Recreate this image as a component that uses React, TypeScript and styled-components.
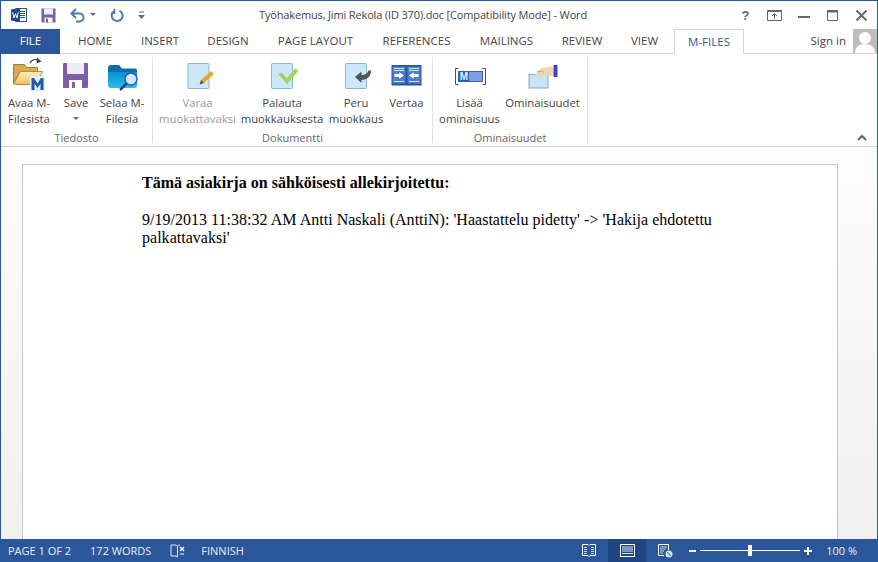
import styled, { createGlobalStyle } from "styled-components";

const GlobalStyle = createGlobalStyle`
  html, body {
    margin: 0;
    padding: 0;
    background: #fff;
    overflow: hidden;
  }
`;

const uiFont = `"Open Sans", "Noto Sans", "Liberation Sans", sans-serif`;

const tabs = [
  { label: "HOME", width: 64, first: true },
  { label: "INSERT", width: 66 },
  { label: "DESIGN", width: 70 },
  { label: "PAGE LAYOUT", width: 105 },
  { label: "REFERENCES", width: 97 },
  { label: "MAILINGS", width: 83 },
  { label: "REVIEW", width: 68 },
  { label: "VIEW", width: 57 },
];

const Paper = ({ x = 7.5 }: { x?: number }) => (
  <rect x={x} y="7.5" width="21" height="25" rx="1" fill="#cde7fb" stroke="#8db6cb" />
);

const WordIcon = () => (
  <svg width="16" height="16" viewBox="0 0 16 16">
    <rect x="5" y="1.5" width="10.5" height="13" fill="#fff" stroke="#2b579a" />
    <path d="M9 4.5h5M9 6.5h5M9 8.5h5M9 10.5h5" stroke="#2b579a" />
    <path d="M0 2.5 9 1v14L0 13.5z" fill="#1f4a8c" />
    <path d="M1.6 5.3 2.9 11l1.6-4.2L6 11l1.3-5.7" fill="none" stroke="#fff" strokeWidth="1" />
  </svg>
);

const QatSave = () => (
  <svg width="15" height="15" viewBox="0 0 15 15">
    <path d="M.5.500h14v14H.5z" fill="#7b5ca6" />
    <rect x="3" y=".5" width="9" height="6" fill="#f0ecf6" />
    <rect x="3.500" y="9.500" width="8" height="5" fill="#fff" />
    <rect x="5" y="10.500" width="2" height="4" fill="#7b5ca6" />
  </svg>
);

const Undo = () => (
  <svg width="15" height="15" viewBox="0 0 15 15" fill="none" stroke="#4a7db4" strokeWidth="2">
    <path d="M1.500 5.500h8a4 4 0 0 1 0 8H6" />
    <path d="M6 1 1.500 5.500 6 10" />
  </svg>
);

const Redo = () => (
  <svg width="15" height="15" viewBox="0 0 15 15" fill="none" stroke="#4a7db4" strokeWidth="2">
    <path d="M9.500 2.600a5.500 5.500 0 1 1-5.700.6" />
    <path d="M3.500 1v4.500H.5" strokeWidth="1.600" transform="translate(1 -.3)" />
  </svg>
);

const Caret = () => (
  <svg width="7" height="4" viewBox="0 0 7 4">
    <path d="M0 0h6L3 3z" fill="#6a6a6a" />
  </svg>
);

const Customize = () => (
  <svg width="7" height="9" viewBox="0 0 7 9">
    <path d="M1 1h5" stroke="#6a6a6a" />
    <path d="M0 4h7L3.500 8z" fill="#6a6a6a" />
  </svg>
);

const AvaaIcon = () => (
  <svg width="36" height="37" viewBox="0 0 36 37">
    <defs>
      <linearGradient id="avaaFront" x1="0" y1="0" x2="0" y2="1">
        <stop offset="0" stopColor="#fff0b8" />
        <stop offset="1" stopColor="#eebf62" />
      </linearGradient>
    </defs>
    <path d="M19 7c2-4 6-4.500 9-2" fill="none" stroke="#444" strokeWidth="1.300" />
    <path d="M26 1.500 30.500 5.500 25.500 7.500z" fill="#444" />
    <path d="M2.500 27V8.500h11l2 3h11V16H9z" fill="#d9ab57" stroke="#a87f36" />
    <path d="M2.500 28 9.500 15.500h22L25 28.500H5z" fill="url(#avaaFront)" stroke="#b78c3c" />
    <rect x="19" y="20" width="15" height="15.500" rx="1" fill="#e4eef9" />
    <path d="M20.500 34V22h2.500l3.500 5.500L30 22h2.500v12h-3v-6.500L26.500 32l-3-4.500V34z" fill="#27579f" />
  </svg>
);

const SaveIcon = () => (
  <svg width="36" height="37" viewBox="0 0 36 37">
    <rect x="5" y="7" width="25" height="25" rx="1" fill="#7f5ea8" />
    <rect x="9" y="7" width="17" height="11" fill="#f0ecf6" />
    <rect x="11" y="24" width="13" height="8" fill="#fff" />
    <rect x="14" y="26" width="3" height="6" fill="#7f5ea8" />
  </svg>
);

const SelaaIcon = () => (
  <svg width="36" height="37" viewBox="0 0 36 37">
    <defs>
      <linearGradient id="selaaFront" x1="0" y1="0" x2="0" y2="1">
        <stop offset="0" stopColor="#0f8fcf" />
        <stop offset="1" stopColor="#22c0ee" />
      </linearGradient>
    </defs>
    <path d="M4 12a3 3 0 0 1 3-3h8l3 3.500h13a2 2 0 0 1 2 2V17H4z" fill="#0b6ea6" />
    <path d="M4 16h29v13a3 3 0 0 1-3 3H7a3 3 0 0 1-3-3z" fill="url(#selaaFront)" />
    <path d="M23 27 16 34" stroke="#1f3f8f" strokeWidth="2.500" />
    <circle cx="27" cy="23" r="6" fill="#cfe9f8" stroke="#2a5caa" strokeWidth="1.500" />
  </svg>
);

const VaraaIcon = () => (
  <svg width="36" height="37" viewBox="0 0 36 37">
    <Paper x={8} />
    <path d="M21 24 31 15l3 3-10 9z" fill="#e9a431" />
    <path d="M19.500 28.500 21 24l3 3z" fill="#555" />
  </svg>
);

const PalautaIcon = () => (
  <svg width="36" height="37" viewBox="0 0 36 37">
    <Paper />
    <path d="M16 17.500 23 25 33 13.500" fill="none" stroke="#a2d45a" strokeWidth="4" />
  </svg>
);

const PeruIcon = () => (
  <svg width="36" height="37" viewBox="0 0 36 37">
    <Paper />
    <path d="M17 21 23.500 15.500v3.500c3 0 5.500-1 7-4.500h2.500c0 6-4 9.500-9.500 9.500v3z" fill="#555" />
  </svg>
);

const VertaaIcon = () => (
  <svg width="36" height="37" viewBox="0 0 36 37">
    <rect x="2.500" y="9" width="30" height="20" fill="#24559f" />
    <rect x="3.500" y="10.500" width="13" height="17" fill="#4f80cc" />
    <rect x="18.500" y="10.500" width="13" height="17" fill="#4f80cc" />
    <path d="M5 12.500h10M5 14.500h10M20 12.500h10M20 14.500h10M5 25.500h10M20 25.500h10" stroke="#cfe0f7" />
    <path d="M5 17.500h5v-2l5.500 4L10 23.500v-2H5zM30 17.500h-5v-2l-5.500 4 5.500 4v-2h5z" fill="#fff" stroke="#1f3f7f" strokeWidth=".5" />
    <path d="M3 29.500h30" stroke="#9aa7ba" />
  </svg>
);

const LisaaIcon = () => (
  <svg width="36" height="37" viewBox="0 0 36 37">
    <path d="M6.500 12.500h-3v16h3M30.500 12.500h3v16h-3" fill="none" stroke="#38517e" />
    <rect x="6.500" y="15.500" width="24" height="10" fill="#7f9eea" stroke="#3f5fa6" />
    <rect x="7" y="16" width="10" height="9" fill="#2e5cab" />
    <MLetter x="12" y="24">M</MLetter>
  </svg>
);

const MLetter = styled.text`
  font-family: "Liberation Sans", sans-serif;
  font-size: 10px;
  font-weight: 700;
  fill: #e7f2ff;
  text-anchor: middle;
`;

const OminaisuudetIcon = () => (
  <svg width="36" height="37" viewBox="0 0 36 37">
    <rect x="4" y="18.500" width="19" height="13.500" fill="#c6e5fa" stroke="#7fa9bf" />
    <path d="M10 18.500 15 13c3-2 9-2.500 13-2v8.500c-3 1-6 1-8 0l-5 2z" fill="#ecd6b8" />
    <path d="M12 16c3-1 5-1 7 0" fill="none" stroke="#c2a484" />
    <rect x="28.500" y="9" width="4" height="12" fill="#3a45c8" />
  </svg>
);

const ReadIcon = () => (
  <svg width="14" height="13" viewBox="0 0 14 13" fill="none" stroke="#fff">
    <path d="M.5.500h5.500l1 1 1-1h5.500v11h-5.500l-1 1-1-1H.500z" />
    <path d="M2 3.500h3M2 5.500h3M2 7.500h3M2 9.500h3M9 3.500h3M9 5.500h3M9 7.500h3M9 9.500h3" stroke="#c6d4ea" />
  </svg>
);

const PrintIcon = () => (
  <svg width="15" height="13" viewBox="0 0 15 13" fill="none" stroke="#fff">
    <rect x=".5" y=".5" width="14" height="12" />
    <path d="M2 3h11M2 5h11M2 7h11M2 9.500h11" stroke="#dbe4f2" />
  </svg>
);

const WebIcon = () => (
  <svg width="15" height="14" viewBox="0 0 15 14" fill="none" stroke="#fff">
    <path d="M.5.500h10V6M.5.500v11H6" />
    <path d="M2 3h7M2 5h6M2 7h4M2 9h3" stroke="#c6d4ea" />
    <circle cx="11" cy="10" r="3.500" fill="#d8e2f2" stroke="none" />
    <path d="M9 9c1-1 2 0 2 1s1 2 2 1" stroke="#2b579a" />
  </svg>
);

const ProofIcon = () => (
  <svg width="16" height="14" viewBox="0 0 16 14" fill="none" stroke="#dfe7f3">
    <path d="M6 1H1v11h5l1.500 1V2zM7.500 2 9 1h1M7.500 5v8" />
    <path d="M10 3l4 4M14 3l-4 4" stroke="#fff" strokeWidth="1.400" />
    <path d="M10 10h4" stroke="#fff" />
  </svg>
);

const App = () => {
  return (
    <Window>
      <GlobalStyle />
      <TitleBar>
        <Quick>
          <WordSlot><WordIcon /></WordSlot>
          <QatSlot $width={29}><QatSave /></QatSlot>
          <QatSlot $width={20}><Undo /></QatSlot>
          <QatSlot $width={20}><Caret /></QatSlot>
          <QatSlot $width={28}><Redo /></QatSlot>
          <QatSlot $width={15}><Customize /></QatSlot>
        </Quick>
        <Title>Työhakemus, Jimi Rekola (ID 370).doc [Compatibility Mode] - Word</Title>
        <Controls>
          <Help>?</Help>
          <Control>
            <svg width="15" height="11" viewBox="0 0 15 11" fill="none" stroke="#666">
              <path d="M.5 1.500h14v9H.5zM0 .5h15" />
              <path d="M7.500 9V4M5 6l2.500-2.500L10 6" />
            </svg>
          </Control>
          <MinimizeControl>
            <svg width="12" height="2" viewBox="0 0 12 2"><rect width="12" height="2" fill="#666" /></svg>
          </MinimizeControl>
          <Control>
            <svg width="11" height="11" viewBox="0 0 11 11" fill="none" stroke="#666">
              <path d="M.5.500h10v10H.5z" />
              <path d="M0 1.500h11" strokeWidth="2" />
            </svg>
          </Control>
          <Control>
            <svg width="11" height="11" viewBox="0 0 11 11" fill="none" stroke="#666" strokeWidth="2">
              <path d="M.5.500l10 10M10.500.5l-10 10" />
            </svg>
          </Control>
        </Controls>
      </TitleBar>

      <TabBar>
        <FileTab>FILE</FileTab>
        {tabs.map((t) => (
          <Tab key={t.label} $width={t.width} $first={t.first}>{t.label}</Tab>
        ))}
        <ActiveTab>M-FILES</ActiveTab>
        <SignIn>Sign in</SignIn>
        <Avatar>
          <svg width="24" height="24" viewBox="0 0 24 24">
            <rect width="24" height="24" fill="#bdbdbd" />
            <circle cx="12" cy="9" r="6" fill="#fff" />
            <path d="M2 24c0-6 4-9 10-9s10 3 10 9z" fill="#fff" />
          </svg>
        </Avatar>
      </TabBar>

      <Ribbon>
        <Group $width={152}>
          <Buttons>
            <RibbonButton $width={50}>
              <IconBox><AvaaIcon /></IconBox>
              <Label>Avaa M-<br />Filesista</Label>
            </RibbonButton>
            <RibbonButton $width={44}>
              <IconBox><SaveIcon /></IconBox>
              <Label>Save</Label>
              <ButtonCaret><Caret /></ButtonCaret>
            </RibbonButton>
            <RibbonButton $width={48}>
              <IconBox><SelaaIcon /></IconBox>
              <Label>Selaa M-<br />Filesia</Label>
            </RibbonButton>
          </Buttons>
          <GroupName>Tiedosto</GroupName>
        </Group>
        <Group $width={280}>
          <Buttons>
            <RibbonButton $width={83} $disabled>
              <IconBox><VaraaIcon /></IconBox>
              <Label>Varaa<br />muokattavaksi</Label>
            </RibbonButton>
            <RibbonButton $width={86}>
              <IconBox><PalautaIcon /></IconBox>
              <Label>Palauta<br />muokkauksesta</Label>
            </RibbonButton>
            <RibbonButton $width={62}>
              <IconBox><PeruIcon /></IconBox>
              <Label>Peru<br />muokkaus</Label>
            </RibbonButton>
            <RibbonButton $width={39}>
              <IconBox><VertaaIcon /></IconBox>
              <Label>Vertaa</Label>
            </RibbonButton>
          </Buttons>
          <GroupName>Dokumentti</GroupName>
        </Group>
        <Group $width={155}>
          <Buttons>
            <RibbonButton $width={67}>
              <IconBox><LisaaIcon /></IconBox>
              <Label>Lisää<br />ominaisuus</Label>
            </RibbonButton>
            <RibbonButton $width={79}>
              <IconBox><OminaisuudetIcon /></IconBox>
              <Label>Ominaisuudet</Label>
            </RibbonButton>
          </Buttons>
          <GroupName>Ominaisuudet</GroupName>
        </Group>
        <Collapse>
          <svg width="10" height="7" viewBox="0 0 10 7" fill="none" stroke="#666" strokeWidth="2">
            <path d="M1 6 5 2l4 4" />
          </svg>
        </Collapse>
      </Ribbon>

      <DocArea>
        <Page>
          <Heading>Tämä asiakirja on sähköisesti allekirjoitettu:</Heading>
          <Body>9/19/2013 11:38:32 AM Antti Naskali (AnttiN): 'Haastattelu pidetty' -&gt; 'Hakija ehdotettu palkattavaksi'</Body>
        </Page>
      </DocArea>

      <StatusBar>
        <StatusText $left={8}>PAGE 1 OF 2</StatusText>
        <StatusText $left={19}>172 WORDS</StatusText>
        <ProofSlot><ProofIcon /></ProofSlot>
        <StatusText $left={15}>FINNISH</StatusText>
        <StatusRight>
          <ViewButton><ReadIcon /></ViewButton>
          <ViewButton $active><PrintIcon /></ViewButton>
          <ViewButton><WebIcon /></ViewButton>
          <Zoom>
            <ZoomSign>
              <svg width="7" height="2" viewBox="0 0 7 2"><rect width="7" height="2" fill="#fff" /></svg>
            </ZoomSign>
            <Track><Thumb /></Track>
            <ZoomSign>
              <svg width="8" height="8" viewBox="0 0 8 8"><path d="M3 0h2v3h3v2H5v3H3V5H0V3h3z" fill="#fff" /></svg>
            </ZoomSign>
          </Zoom>
          <ZoomValue>100 %</ZoomValue>
        </StatusRight>
      </StatusBar>
    </Window>
  );
};

const Window = styled.div`
  box-sizing: border-box;
  width: 878px;
  height: 562px;
  display: flex;
  flex-direction: column;
  border: 1px solid #2b579a;
  border-bottom: 0;
  background: #fff;
  font-family: ${uiFont};
  overflow: hidden;
`;

const TitleBar = styled.div`
  height: 28px;
  display: flex;
  align-items: center;
  flex-shrink: 0;
`;

const Quick = styled.div`
  width: 153px;
  display: flex;
  align-items: center;
`;

const WordSlot = styled.div`
  width: 40px;
  padding-left: 10px;
  box-sizing: border-box;
  display: flex;
`;

const QatSlot = styled.div<{ $width: number }>`
  width: ${(p) => p.$width}px;
  display: flex;
`;

const Title = styled.div`
  width: 538px;
  padding-bottom: 1px;
  text-align: center;
  font-size: 11px;
  letter-spacing: -0.15px;
  color: #444;
  white-space: nowrap;
`;

const Controls = styled.div`
  flex: 1;
  display: flex;
  align-items: center;
  justify-content: flex-end;
  padding-right: 1px;
`;

const Control = styled.div`
  width: 29px;
  display: flex;
  justify-content: center;
`;

const MinimizeControl = styled(Control)`
  padding-top: 4px;
`;

const Help = styled(Control)`
  font-family: "Liberation Sans", sans-serif;
  font-size: 13px;
  font-weight: 700;
  color: #666;
`;

const TabBar = styled.div`
  height: 25px;
  display: flex;
  align-items: stretch;
  box-sizing: border-box;
  border-bottom: 1px solid #d4d4d4;
  flex-shrink: 0;
`;

const FileTab = styled.div`
  width: 59px;
  margin-bottom: -1px;
  padding-bottom: 2px;
  background: #2b579a;
  color: #fff;
  font-size: 11.500px;
  display: flex;
  align-items: center;
  justify-content: center;
`;

const Tab = styled.div<{ $width: number; $first?: boolean }>`
  width: ${(p) => p.$width}px;
  margin-left: ${(p) => (p.$first ? 3 : 0)}px;
  padding-bottom: 2px;
  color: #444;
  font-size: 11.500px;
  display: flex;
  align-items: center;
  justify-content: center;
  white-space: nowrap;
`;

const ActiveTab = styled.div`
  width: 70px;
  box-sizing: border-box;
  margin-left: 1px;
  margin-bottom: -1px;
  padding-bottom: 2px;
  background: #fff;
  border: 1px solid #d4d4d4;
  border-bottom: 0;
  color: #2b579a;
  font-size: 11.500px;
  display: flex;
  align-items: center;
  justify-content: center;
`;

const SignIn = styled.div`
  margin-left: auto;
  margin-right: 7px;
  padding-bottom: 2px;
  color: #444;
  font-size: 11.500px;
  display: flex;
  align-items: center;
`;

const Avatar = styled.div`
  width: 24px;
  height: 24px;
  overflow: hidden;
`;

const Ribbon = styled.div`
  height: 93px;
  box-sizing: border-box;
  display: flex;
  border-bottom: 1px solid #d4d4d4;
  flex-shrink: 0;
`;

const Group = styled.div<{ $width: number }>`
  width: ${(p) => p.$width}px;
  box-sizing: border-box;
  margin: 4px 0 3px;
  padding-left: 3px;
  border-right: 1px solid #e1e1e1;
  display: flex;
  flex-direction: column;
`;

const Buttons = styled.div`
  flex: 1;
  display: flex;
  margin-top: -2px;
`;

const RibbonButton = styled.div<{ $width: number; $disabled?: boolean }>`
  width: ${(p) => p.$width}px;
  flex-shrink: 0;
  display: flex;
  flex-direction: column;
  align-items: center;
  color: ${(p) => (p.$disabled ? "#9a9a9a" : "#444")};
`;

const IconBox = styled.div`
  height: 37px;
  margin-bottom: 2px;
  display: flex;
`;

const Label = styled.div`
  font-size: 11.300px;
  line-height: 16px;
  text-align: center;
  white-space: nowrap;
`;

const ButtonCaret = styled.div`
  margin-top: 6px;
  display: flex;
`;

const GroupName = styled.div`
  height: 12px;
  line-height: 14px;
  font-size: 11px;
  color: #666;
  text-align: center;
  padding-right: 3px;
`;

const Collapse = styled.div`
  margin-left: auto;
  margin-right: 10px;
  align-self: flex-end;
  margin-bottom: 5px;
  display: flex;
`;

const DocArea = styled.div`
  flex: 1;
  min-height: 0;
  padding: 17px 39px 0 21px;
  background: linear-gradient(#fdfdfd, #f0f0f0);
  overflow: hidden;
`;

const Page = styled.div`
  box-sizing: border-box;
  height: 100%;
  padding: 9px 120px 0 119px;
  background: #fff;
  border: 1px solid #c6c6c6;
  border-bottom: 0;
  font-family: "Liberation Serif", "Times New Roman", serif;
  font-size: 16px;
  line-height: 18px;
  letter-spacing: 0.02px;
  color: #000;
`;

const Heading = styled.div`
  font-weight: 700;
  margin-bottom: 19px;
`;

const Body = styled.div``;

const StatusBar = styled.div`
  height: 23px;
  margin: 0 -1px;
  background: #2b579a;
  color: #fff;
  display: flex;
  align-items: center;
  flex-shrink: 0;
`;

const StatusText = styled.div<{ $left: number }>`
  margin-left: ${(p) => p.$left}px;
  font-size: 11px;
  color: #e8eef7;
  white-space: nowrap;
`;

const ProofSlot = styled.div`
  margin-left: 19px;
  display: flex;
`;

const StatusRight = styled.div`
  margin-left: auto;
  height: 100%;
  display: flex;
  align-items: center;
  padding-right: 21px;
`;

const ViewButton = styled.div<{ $active?: boolean }>`
  width: 38px;
  height: 100%;
  display: flex;
  align-items: center;
  justify-content: center;
  background: ${(p) => (p.$active ? "#1f4682" : "transparent")};
`;

const Zoom = styled.div`
  display: flex;
  align-items: center;
  margin-left: 5px;
`;

const ZoomSign = styled.div`
  display: flex;
`;

const Track = styled.div`
  width: 100px;
  height: 1px;
  margin: 0 4px;
  background: #fff;
  display: flex;
  justify-content: center;
  align-items: center;
`;

const Thumb = styled.div`
  width: 4px;
  height: 11px;
  background: #fff;
  flex-shrink: 0;
`;

const ZoomValue = styled.div`
  margin-left: 14px;
  font-size: 11px;
  color: #e8eef7;
`;

export default App;
